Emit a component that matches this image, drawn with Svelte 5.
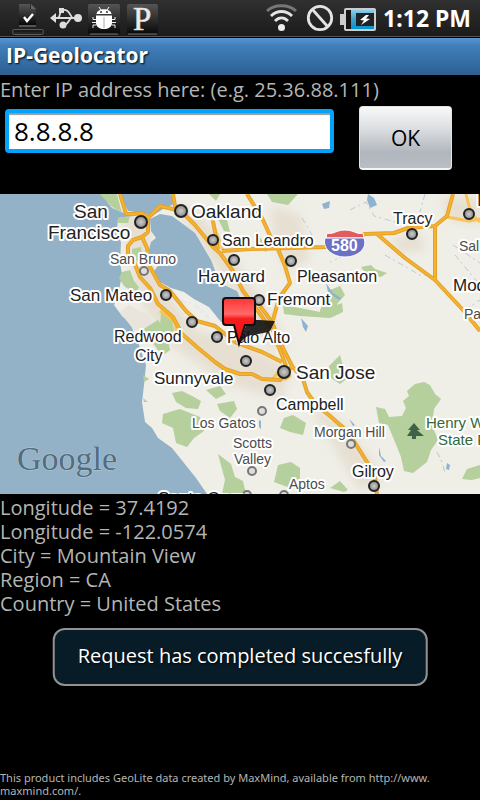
<script>
  let ip = $state('8.8.8.8');

  const results = [
    ['Longitude', '37.4192'],
    ['Longitude', '-122.0574'],
    ['City', 'Mountain View'],
    ['Region', 'CA'],
    ['Country', 'United States']
  ];

  // Map labels: text, x, baseline, size, style
  const labels = [
    ['San', 74, 218, 19, 'city'],
    ['Francisco', 48, 239, 19, 'city'],
    ['Oakland', 191, 218, 19, 'city'],
    ['San Leandro', 222, 246, 16, 'city'],
    ['San Bruno', 110, 264, 14, 'town'],
    ['Hayward', 198, 282, 17, 'city'],
    ['Pleasanton', 297, 282, 16, 'city'],
    ['Tracy', 393, 224, 16, 'city'],
    ['Mod', 477, 206, 19, 'city'],
    ['Salida', 459, 251, 14, 'town'],
    ['Modesto', 453, 291, 17, 'city'],
    ['Patterson', 464, 319, 14, 'town'],
    ['San Mateo', 70, 301, 17, 'city'],
    ['Fremont', 267, 305, 17, 'city'],
    ['Redwood', 114, 342, 16, 'city'],
    ['City', 135, 361, 16, 'city'],
    ['Palo Alto', 227, 343, 16, 'city'],
    ['Sunnyvale', 154, 384, 17, 'city'],
    ['San Jose', 296, 379, 19, 'city'],
    ['Campbell', 276, 410, 16, 'city'],
    ['Los Gatos', 192, 428, 14, 'town'],
    ['Morgan Hill', 314, 437, 14, 'town'],
    ['Scotts', 233, 448, 14, 'town'],
    ['Valley', 234, 464, 14, 'town'],
    ['Gilroy', 352, 477, 16, 'city'],
    ['Aptos', 289, 489, 14, 'town'],
    ['Santa Cruz', 158, 504, 17, 'city'],
    ['Henry W. Coe', 426, 428, 15, 'park'],
    ['State Park', 438, 445, 15, 'park']
  ];

  // Map markers: x, y, radius, kind
  const dots = [
    [141, 222, 6, 'big'], [181, 211, 6, 'big'], [284, 372, 6, 'big'],
    [213, 240, 5, 'mid'], [234, 260, 5, 'mid'], [291, 261, 5, 'mid'],
    [412, 234, 5, 'mid'], [469, 214, 5, 'mid'], [166, 295, 5, 'mid'],
    [259, 300, 5, 'mid'], [192, 322, 5, 'mid'], [217, 337, 5, 'mid'],
    [246, 361, 5, 'mid'], [270, 390, 5, 'mid'], [374, 486, 5, 'mid'],
    [144, 271, 4, 'small'], [262, 411, 4, 'small'],
    [351, 444, 4, 'small'], [252, 471, 4, 'small'],
    [247, 495, 4, 'small'], [284, 495, 4, 'small']
  ];

  const majorRoads = [
    'M120 194L126 214L134 214L142 213L148 218L160 206L181 211L195 225L213 247L220 253L233 271L243 291L255 307L270 328L280 350L286 366',
    'M173 194L175 206L181 211',
    'M148 218V232L142 237L133 240L128 246V254L134 262L140 277L150 288L158 304L173 317L182 334L198 348L215 362L225 369L240 374L252 374L262 379L280 380L286 374L292 366L285 352L277 335L272 322L260 306',
    'M142 237L147 248L150 267L160 285L170 291L186 311L197 321L215 326L235 342L262 352L282 362',
    'M213 221L218 249',
    'M222 251L250 249L290 248L325 247L365 234L394 233L408 228L435 226L447 216L453 194',
    'M247 194L263 220L272 240L278 249L285 266L290 283L279 298L273 320',
    'M435 226V280',
    'M377 234L405 258L435 280L463 310L480 331',
    'M292 366L303 379L307 392L316 405L330 416L347 431L357 446L367 462L375 477L377 494'
  ];

  const minorRoads = [
    'M447 217L469 221L480 219', 'M466 194L471 214L480 222',
    'M160 311L175 322L177 334', 'M212 219L216 232L224 252',
    'M271 381L280 370L290 376L284 380'
  ];

  const parks = [
    'M100 194H117L122 213L112 207Z',
    'M118 218L130 216L128 223H118Z',
    'M132 249L141 247L142 255L137 262L132 255Z',
    'M122 272L130 270L134 281L139 287L136 294L124 286L119 278Z',
    'M142 330L158 320L166 332L170 350L162 356L152 342Z',
    'M161 313L172 319L174 331L165 334L160 326Z',
    'M209 194H220L216 201Z', 'M267 194H298L288 205L272 202Z',
    'M218 219L227 220L230 232L224 231Z',
    'M256 231L264 243L270 246L266 252L258 246Z',
    'M283 305L300 308L320 312L342 303L343 312L330 318L300 316L284 314Z',
    'M361 267L371 265L375 269L387 273L381 277L366 274Z',
    'M320 310L330 290L340 286L345 295L337 304L343 311L332 317L320 314Z',
    'M172 393L182 391L192 396L201 401L198 409L186 408L176 402Z',
    'M217 404L234 401L237 409L230 418L220 411Z',
    'M206 390L220 386L226 394L216 399Z',
    'M163 414L180 409L200 417L204 431L194 438L187 447L176 443L173 428L162 423Z',
    'M218 454L231 464L235 477L243 481L246 494H222L225 480Z',
    'M278 465L291 462L300 468L300 482L290 488L274 482Z',
    'M284 418L293 415L306 423L303 435L290 432L280 428Z',
    'M329 366L340 355L343 366L348 378L340 384L331 378Z',
    'M407 391L415 384L424 382L430 385L435 394L441 399L434 409L432 425L438 440L431 450L427 462L413 473L404 471L401 457L395 442L388 425L379 423L376 407L385 409L389 417L402 416L406 408L403 401L409 396Z',
    'M462 479L467 469L480 465V478L472 480Z',
    'M330 488L340 481L348 490L344 492Z',
    'M143 375L149 379L144 382Z', 'M143 398L148 402L144 402Z'
  ];

  const creeks = [
    'M368 194L374 198L377 205L370 208L367 200Z', 'M322 204L330 201L329 208L324 209Z',
    'M301 318L308 326L306 332L303 327Z', 'M326 283L333 293L341 298L339 300L328 292Z',
    'M379 447L381 456L386 461L384 462L379 455Z', 'M447 463L450 465L449 470L446 469Z',
    'M349 419L355 425L353 426Z', 'M259 420L261 421V429L259 427Z'
  ];
</script>

<div class="screen">
  <header class="status">
    <svg class="tray" viewBox="0 0 160 36" role="img" aria-label="Notifications">
      <defs>
        <linearGradient id="tile" x1="0" y1="0" x2="0" y2="1">
          <stop offset="0" stop-color="#555" />
          <stop offset="1" stop-color="#080808" />
        </linearGradient>
      </defs>
      <path d="M19 4H30V9H36V25H19Z" fill="url(#tile)" />
      <path d="M31 4L36 9H31Z" fill="#666" />
      <path d="M19 26H36" stroke="#888" />
      <path d="M24 17L27 21L33 14" fill="none" stroke="#fff" stroke-width="2.4" />
      <rect x="12.5" y="29.5" width="31" height="5" rx="2" fill="#252525" stroke="#5b5b5b" />
      <path d="M14 31H42" stroke="#111" />
      <path d="M55 18H78M58 18C61 16 59 10 63 10M63 10C70 9 70 17 73 18M63 25C69 25 68 19 72 18" fill="none" stroke="#ddd" stroke-width="1.8" />
      <path d="M50 18L56 13V23Z" fill="#ddd" />
      <rect x="59" y="8" width="5" height="5" fill="#ddd" />
      <circle cx="63" cy="25" r="3.5" fill="#ddd" />
      <circle cx="78" cy="18" r="4" fill="#ddd" />
      <rect x="88" y="4" width="32" height="30" rx="2" fill="url(#tile)" />
      <path d="M90 34H118" stroke="#777" />
      <path d="M96.500 14C97 7.500 111 7.500 111.500 14Z" fill="#fff" />
      <path d="M99 7L101 10M109 7L107 10" stroke="#fff" />
      <path d="M96 15.500H112V23C112 27 108 29 104 29C100 29 96 27 96 23Z" fill="#fff" />
      <path d="M96 19.500H93V17M96 22.500H92M96 25H93V28M112 19.500H115V17M112 22.500H116M112 25H115V28" fill="none" stroke="#eee" />
      <path d="M104 17V28" stroke="#aaa" />
      <circle cx="101" cy="12" r="1" fill="#333" />
      <circle cx="107" cy="12" r="1" fill="#333" />
      <rect x="127" y="4" width="31" height="30" rx="2" fill="url(#tile)" />
      <path d="M128 34H157" stroke="#777" />
      <text x="133" y="30" class="glyph">P</text>
    </svg>
    <div class="system">
      <svg class="indicators" viewBox="264 0 114 36" role="img" aria-label="Wi-Fi, silent, battery charging">
        <g fill="none" stroke="#e4e4e4" stroke-width="2.8">
          <path d="M267 11C274 4 289 4 296 11" stroke="#777" />
          <path d="M271 16C277 10 286 10 292 16" />
          <path d="M275 21C279 17 284 17 288 21" />
          <circle cx="320" cy="18" r="11.7" />
          <path d="M312 9L328 27" />
        </g>
        <circle cx="281.5" cy="27.5" r="3.5" fill="#eee" />
        <path d="M340 14H344V25H340Z" fill="#ccc" />
        <linearGradient id="charge" x1="0" y1="0" x2="0" y2="1">
          <stop offset="0" stop-color="#8bd0ea" />
          <stop offset="0.5" stop-color="#3d9fc8" />
          <stop offset="1" stop-color="#0095d4" />
        </linearGradient>
        <rect x="345" y="9" width="30" height="21" rx="1" fill="#151515" stroke="#ccc" stroke-width="2" />
        <rect x="351" y="10" width="23" height="19" fill="url(#charge)" />
        <rect x="356" y="13" width="18" height="13" fill="#202326" />
        <path d="M366 15L360 20L364 20.500L361 25L370 19L366 18.500L369 15Z" fill="#fff" />
      </svg>
      <time>1:12 PM</time>
    </div>
  </header>

  <h1>IP-Geolocator</h1>

  <main>
    <form onsubmit={(e) => e.preventDefault()}>
      <label for="ip">Enter IP address here: (e.g. 25.36.88.111)</label>
      <div class="row">
        <input id="ip" type="text" bind:value={ip} />
        <button type="submit">OK</button>
      </div>
    </form>

    <svg class="map" viewBox="0 194 480 300" role="img" aria-label="Map of the San Francisco Bay Area">
      <defs>
        <linearGradient id="pin" x1="0" y1="0" x2="0" y2="1">
          <stop offset="0" stop-color="#f33" />
          <stop offset="0.35" stop-color="#ff6a6a" />
          <stop offset="0.45" stop-color="#f81c1c" />
          <stop offset="1" stop-color="#e81515" />
        </linearGradient>
        <radialGradient id="ball">
          <stop offset="0" stop-color="#ccc" />
          <stop offset="1" stop-color="#888" />
        </radialGradient>
        <filter id="soft" x="-20%" y="-20%" width="140%" height="140%">
          <feGaussianBlur stdDeviation="5" />
        </filter>
      </defs>
      <rect y="194" width="480" height="300" fill="#efeee7" />
      <g fill="#e6dfd2" filter="url(#soft)">
        <path d="M120 216H148L152 260L166 292L196 330L250 345L290 370L282 400L230 385L170 345L140 300Z" />
        <path d="M170 200L200 215L225 245L255 290L290 345L270 350L240 300L210 260Z" />
        <path d="M270 205L300 215L310 260L285 270L275 240Z" />
        <path d="M390 240L420 232L425 250L400 252Z" />
        <path d="M310 405L345 425L385 480L360 490L330 440Z" />
        <path d="M440 198H480V225L450 220Z" />
      </g>
      <g class="water">
        <path d="M0 194H101L112 208L124 213L134 216L118 218L117 230L121 243L120 262L122 275L119 290L114 305L122 316L131 324L134 334L139 345L146 365L144 385L142 402L145 422L152 428L158 438L172 448L184 463L196 478L207 494H0Z" />
        <path d="M119 194H171L174 204L163 209L152 216L143 213L128 211Z" />
        <path d="M150 219L160 214L172 216L183 224L195 233L205 250L211 260L218 278L226 286L237 291L241 300L241 314L232 323L221 322L209 307L194 299L184 292L171 288L160 282L154 271L158 266L151 260L149 250L151 242L156 238L151 231Z" />
      </g>
      <path d="M120 312L129 305L147 314L158 328L148 337L133 329Z" fill="#e9e5dd" />
      <g fill="#b5cf9d">
        {#each parks as d}<path {d} />{/each}
      </g>
      <g fill="#8fb2cf">
        {#each creeks as d}<path {d} />{/each}
      </g>
      <g fill="none" stroke="#b9cbdc" stroke-dasharray="6 3 2 4">
        <path d="M350 210L366 202L374 216L395 222M425 194L420 212M453 245L480 263M455 255L480 285M385 255L420 275L435 276M465 310L480 300M302 218L312 235M345 255L330 262" />
        <path d="M230 300L246 318L233 330M180 300L196 306L209 318" stroke="#e6ebea" stroke-width="3" />
        <path d="M437 452L442 462L445 473" stroke="#b5cf9d" />
      </g>
      <g fill="none" stroke-linejoin="round">
        {#each minorRoads as d}<path {d} stroke="#f6c556" stroke-width="3" />{/each}
        {#each majorRoads as d}<path {d} stroke="#e2a22a" stroke-width="4" />{/each}
        {#each majorRoads as d}<path {d} stroke="#f6b22e" stroke-width="2" />{/each}
      </g>
      <path d="M414 423L420 430L417 430L424 436L416 436V439H412V436L407 436L411 430L408 430Z" fill="#3f6349" />
      <path d="M327 233C333 235 336 230 345 230C354 230 357 235 363 233L364 238H326Z" fill="#e15c5c" stroke="#fff" />
      <path d="M325 238H364C368 249 357 257 345 257C333 257 322 249 325 238Z" fill="#6c71c5" stroke="#fff" />
      <text x="331" y="251" class="shield">580</text>
      {#each dots as [x, y, r, kind]}
        <circle cx={x} cy={y} {r} class={kind} />
      {/each}
      {#each labels as [text, x, y, size, kind]}
        <text {x} {y} font-size={size} class={kind}>{text}</text>
      {/each}
      <text x="17" y="470" class="brand">Google</text>
      <path d="M239 344L247 323C256 318 265 321 275 321L270 331C262 335 252 333 246 337Z" fill="#111" opacity="0.9" />
      <path d="M226 298H252Q255 298 255 301V322Q255 325 252 325H245L239 344L234 325H226Q223 325 223 322V301Q223 298 226 298Z" fill="url(#pin)" stroke="#16090a" stroke-width="2" />
    </svg>

    <dl>
      {#each results as [name, value]}
        <div><dt>{name} =&nbsp;</dt><dd>{value}</dd></div>
      {/each}
    </dl>
  </main>

  <footer>This product includes GeoLite data created by MaxMind, available from http://www.<wbr />maxmind.com/.</footer>

  <div class="toast" role="status">Request has completed succesfully</div>
</div>

<style>
  :global(body) {
    margin: 0;
    background: #000;
  }
  .screen {
    position: relative;
    display: flex;
    flex-direction: column;
    min-height: 100vh;
    background: #000;
    color: #b4b6b4;
    font-family: 'Open Sans', 'Noto Sans', sans-serif;
    font-size: 20px;
    line-height: 24px;
  }
  .status {
    display: flex;
    justify-content: space-between;
    height: 36px;
    background: linear-gradient(#303030, #1b1b1b);
    border-bottom: 1px solid #555;
  }
  .tray {
    width: 160px;
    height: 36px;
  }
  .system {
    display: flex;
    align-items: center;
    gap: 5px;
    padding-right: 9px;
  }
  .indicators {
    width: 114px;
    height: 36px;
  }
  time {
    color: #fff;
    font-family: 'Noto Sans', sans-serif;
    font-size: 23px;
    font-weight: 700;
    line-height: 36px;
  }
  .glyph {
    fill: #eee;
    stroke: #ddd;
    stroke-width: 0.6px;
    font: 33px 'Liberation Serif', serif;
  }
  h1 {
    margin: 1px 0 0;
    padding: 0 6px;
    height: 37px;
    background: linear-gradient(#5b95d0, #427fba 20%, #2f659b 85%, #315f8b);
    color: #fff;
    font-size: 21px;
    font-weight: 700;
    line-height: 34px;
    text-shadow: 1px 1px 2px #000;
  }
  form {
    height: 119px;
    padding-top: 3px;
    box-sizing: border-box;
  }
  label {
    display: block;
  }
  .row {
    display: flex;
    align-items: flex-start;
    gap: 25px;
    padding: 4px 28px 0 5px;
  }
  input {
    flex: 1;
    min-width: 0;
    height: 44px;
    margin: 3px 0 0;
    padding: 0 5px;
    box-sizing: border-box;
    border: 4px solid #03a2fb;
    border-radius: 4px;
    outline: none;
    background: #fff;
    box-shadow: inset 0 2px 1px #999;
    color: #000;
    font: 26px 'Open Sans', 'Noto Sans', sans-serif;
  }
  button {
    width: 93px;
    height: 64px;
    padding: 0;
    border: 1px solid #e2e4e6;
    border-bottom: 2px solid #f4f4f4;
    border-radius: 4px;
    background: linear-gradient(#f8f8f8, #dcdfe2 35%, #b0b6bd 75%, #b9bec2);
    color: #000;
    font: 21px 'Open Sans', 'Noto Sans', sans-serif;
  }
  .map {
    display: block;
    width: 100%;
  }
  .water {
    fill: #93b1c7;
  }
  .map text {
    font-family: 'Liberation Sans', Arial, sans-serif;
    paint-order: stroke;
    stroke: #fff;
    stroke-width: 4px;
    stroke-linejoin: round;
  }
  .map .city {
    fill: #222;
  }
  .map .town {
    fill: #4c4c4c;
  }
  .map .park {
    fill: #33683c;
  }
  .map .shield {
    fill: #fff;
    stroke: none;
    font-size: 16px;
    font-weight: 700;
  }
  .map .brand {
    fill: #536d7e;
    stroke: #b9ccd9;
    stroke-width: 1px;
    font-family: 'Liberation Serif', serif;
    font-size: 34px;
  }
  .big,
  .mid {
    fill: url(#ball);
    stroke: #222;
    stroke-width: 2px;
  }
  .small {
    fill: #ddd;
    stroke: #777;
    stroke-width: 2px;
  }
  dl {
    margin: 2px 0 0;
  }
  dl div {
    display: flex;
  }
  dd {
    margin: 0;
  }
  footer {
    margin-top: auto;
    padding-bottom: 3px;
    font-family: 'Noto Sans', sans-serif;
    font-size: 11px;
    line-height: 13px;
  }
  .toast {
    position: absolute;
    bottom: 114px;
    left: 50%;
    transform: translateX(-50%);
    padding: 14px 23px 16px;
    border: 2px solid #929292;
    border-radius: 12px;
    background: #081c28;
    color: #fff;
    white-space: nowrap;
    text-shadow: 1px 1px 2px #000;
  }
</style>
